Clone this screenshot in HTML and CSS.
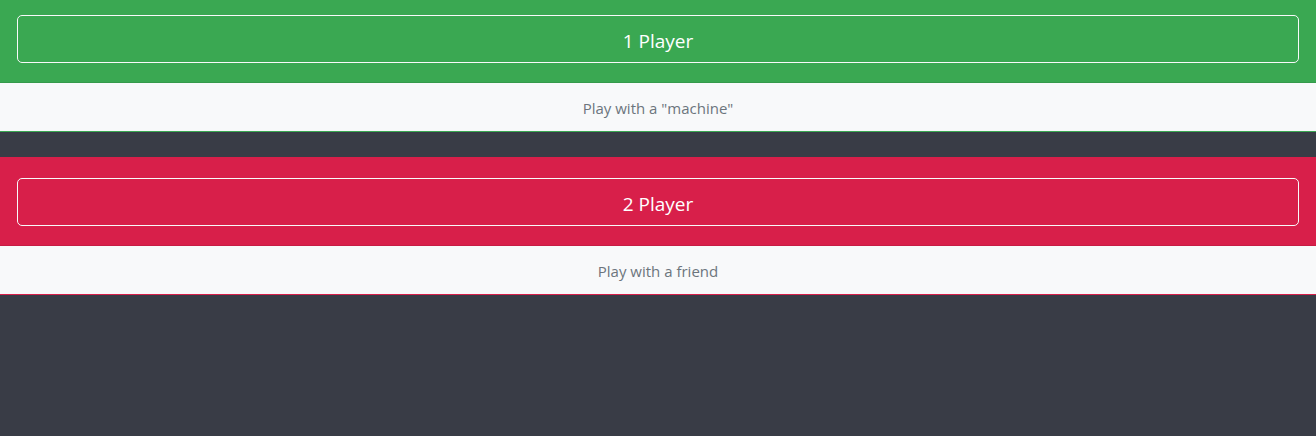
FILE: index.html
```html
<!DOCTYPE html>
<html>
<head>
<meta charset="utf-8">
<link rel="stylesheet" href="styles.css">
</head>
<body>
<div class="list">
  <div class="card card-green">
    <div class="card-header"><button class="btn">1 Player</button></div>
    <div class="card-body">Play with a "machine"</div>
  </div>
  <div class="card card-red">
    <div class="card-header"><button class="btn">2 Player</button></div>
    <div class="card-body">Play with a friend</div>
  </div>
</div>
</body>
</html>
```
FILE: styles.css
```css
html, body {
  margin: 0;
  padding: 0;
  height: 100%;
  overflow: hidden;
}
body {
  background: #393c46;
  font-family: "Open Sans", "Noto Sans", sans-serif;
}
.list {
  margin-top: -6px;
  display: flex;
  flex-direction: column;
  gap: 25px;
}
.card {
  border-top: 1px solid;
  border-bottom: 1px solid;
  display: flex;
  flex-direction: column;
}
.card-green { border-color: #3aa852; }
.card-green .card-header { background: #3aa852; }
.card-red { border-color: #d81f4a; }
.card-red .card-header { background: #d81f4a; }
.card-header {
  padding: 20px 17px 19px;
  border-bottom: 1px solid rgba(0,0,0,0.08);
  display: flex;
}
.btn {
  flex: 1;
  height: 48px;
  background: transparent;
  border: 1px solid #f8f9fa;
  border-radius: 5px;
  color: #fff;
  font-family: "Open Sans", "Noto Sans", sans-serif;
  font-size: 19px;
  padding: 3px 0 0;
}
.card-body {
  background: #f8f9fa;
  height: 48px;
  box-sizing: border-box;
  padding-top: 2px;
  display: flex;
  align-items: center;
  justify-content: center;
  font-size: 15px;
  color: #6c757d;
}
```
